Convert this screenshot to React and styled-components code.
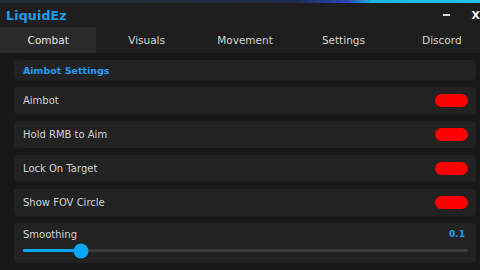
import React, { useState } from 'react';
import styled, { createGlobalStyle } from 'styled-components';

const GlobalStyle = createGlobalStyle`
  html, body {
    margin: 0;
    padding: 0;
    background: #181818;
    overflow: hidden;
  }
  * {
    box-sizing: border-box;
  }
`;

const Window = styled.div`
  width: 490px;
  height: 270px;
  background: #181818;
  font-family: 'DejaVu Sans', 'Noto Sans', sans-serif;
  display: flex;
  flex-direction: column;
`;

const TopEdge = styled.div`
  height: 3px;
  background: linear-gradient(90deg, #2a2c33 0%, #262a36 35%, #1d2a4c 60%, #2c48b8 71%, #17b4e6 76%, #1fc6f0 100%);
`;

const TitleBar = styled.div`
  height: 24px;
  background: #1e1e1e;
  display: flex;
  align-items: center;
  padding: 0 10px 0 6px;
`;

const Title = styled.div`
  flex: 1;
  color: #1b9ef2;
  font-weight: 700;
  font-size: 12.5px;
  letter-spacing: 0.2px;
`;

const Minimize = styled.div`
  width: 7px;
  height: 2px;
  background: #d8d8d8;
  margin-right: 22px;
`;

const Close = styled.div`
  color: #f2f2f2;
  font-weight: 700;
  font-size: 11px;
  line-height: 1;
`;

const Tabs = styled.div`
  height: 26px;
  background: #1e1e1e;
  display: flex;
  gap: 2px;
`;

const Tab = styled.div`
  flex: 1;
  display: flex;
  align-items: center;
  justify-content: center;
  font-size: 10.5px;
  color: ${p => (p.$active ? '#e2e2e2' : '#d4d4d4')};
  background: ${p => (p.$active ? '#2a2a2a' : 'transparent')};
`;

const Content = styled.div`
  padding: 7px 14px 0;
  display: flex;
  flex-direction: column;
  gap: 7px;
`;

const Header = styled.div`
  height: 20px;
  border-radius: 4px;
  background: #222222;
  display: flex;
  align-items: center;
  padding: 0 9px;
  color: #1b9ef2;
  font-weight: 700;
  font-size: 9.5px;
`;

const Row = styled.div`
  height: 27px;
  border-radius: 4px;
  background: #222222;
  display: flex;
  align-items: center;
  justify-content: space-between;
  padding: 0 8px 0 9px;
  color: #d2d2d2;
  font-size: 10px;
`;

const Toggle = styled.div`
  width: 33px;
  height: 13px;
  border-radius: 7px;
  background: #ff0000;
`;

const SliderCard = styled.div`
  height: 40px;
  border-radius: 4px;
  background: #222222;
  padding: 4px 8px 0 9px;
  display: flex;
  flex-direction: column;
`;

const SliderHead = styled.div`
  display: flex;
  justify-content: space-between;
  align-items: center;
  height: 14px;
  color: #d2d2d2;
  font-size: 10px;
`;

const Value = styled.span`
  color: #1b9ef2;
  font-weight: 700;
  font-size: 9px;
  margin-right: 3px;
`;

const Track = styled.div`
  position: relative;
  margin-top: 8px;
  height: 3px;
  border-radius: 2px;
  background: #3a3a3a;
`;

const Fill = styled.div`
  height: 100%;
  border-radius: 2px;
  background: #05a6ff;
`;

const Thumb = styled.div`
  position: absolute;
  top: 50%;
  width: 15px;
  height: 15px;
  border-radius: 50%;
  background: #05a6ff;
  transform: translate(-50%, -50%);
`;

const tabs = ['Combat', 'Visuals', 'Movement', 'Settings', 'Discord'];
const options = ['Aimbot', 'Hold RMB to Aim', 'Lock On Target', 'Show FOV Circle'];

export default function App() {
  const [active, setActive] = useState('Combat');
  const smoothing = 0.1;
  // thumb sits at ~13% of the track in the reference
  const pct = 13;

  return (
    <>
      <GlobalStyle />
      <Window>
        <TopEdge />
        <TitleBar>
          <Title>LiquidEz</Title>
          <Minimize />
          <Close>X</Close>
        </TitleBar>
        <Tabs>
          {tabs.map(t => (
            <Tab key={t} $active={t === active} onClick={() => setActive(t)}>
              {t}
            </Tab>
          ))}
        </Tabs>
        <Content>
          <Header>Aimbot Settings</Header>
          {options.map(o => (
            <Row key={o}>
              {o}
              <Toggle />
            </Row>
          ))}
          <SliderCard>
            <SliderHead>
              Smoothing
              <Value>{smoothing}</Value>
            </SliderHead>
            <Track>
              <Fill style={{ width: pct + '%' }} />
              <Thumb style={{ left: pct + '%' }} />
            </Track>
          </SliderCard>
        </Content>
      </Window>
    </>
  );
}
